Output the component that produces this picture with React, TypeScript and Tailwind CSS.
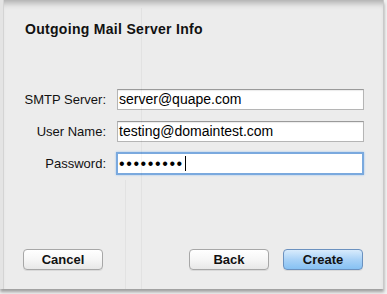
import React from 'react'

const font = { fontFamily: '"Liberation Sans", Arial, sans-serif' }

function Field({ label, value, focused }: { label: string; value?: string; focused?: boolean }) {
  return (
    <div className="flex items-center">
      <label className="w-[104px] shrink-0 pr-[2px] text-right text-[13px] text-[#111]">{label}</label>
      <div
        className={
          focused
            ? 'ml-[8px] flex h-[23px] w-[248px] items-center border-[2px] border-[#7aa9de] bg-white pl-[1px] shadow-[0_0_2px_#9cc3ee]'
            : 'ml-[9px] flex h-[21px] w-[247px] items-center border border-[#b5b5b5] border-t-[#9a9a9a] bg-white pl-[1px] shadow-[inset_0_1px_1px_rgba(0,0,0,0.08)]'
        }
      >
        {focused ? (
          <>
            <span className="text-[16px] leading-none tracking-[1.6px] text-black">•••••••••</span>
            <span className="ml-[1px] h-[15px] w-[1px] bg-black" />
          </>
        ) : (
          <span className="text-[14px] text-black">{value}</span>
        )}
      </div>
    </div>
  )
}

function Button({ children, primary, className }: { children: React.ReactNode; primary?: boolean; className?: string }) {
  return (
    <button
      className={
        'flex h-[21px] items-center justify-center rounded-[4px] border text-[13px] font-bold text-[#111] ' +
        (primary
          ? 'border-[#6b91bf] bg-gradient-to-b from-[#d8ebfc] via-[#a9d2f7] to-[#86c1f3] shadow-[0_1px_0_rgba(0,0,0,0.08)] '
          : 'border-[#a7a7a7] bg-gradient-to-b from-[#ffffff] via-[#f6f6f6] to-[#e8e8e8] shadow-[0_1px_0_rgba(0,0,0,0.08)] ') +
        (className ?? '')
      }
    >
      {children}
    </button>
  )
}

export default function App() {
  return (
    <div className="relative h-[294px] w-[387px] overflow-hidden bg-[#f2f2f2]" style={font}>
      <div className="flex h-[289px] w-[384px] flex-col border-l-[3px] border-r border-l-[#e4e4e4] border-r-[#c9c9c9] bg-[#ececec] shadow-[inset_0_7px_6px_-4px_rgba(0,0,0,0.28),0_3px_3px_rgba(0,0,0,0.35)]">
        <div className="border-l border-[#d4d4d4] flex h-full flex-col">
          <h1 className="ml-[21px] mt-[21px] text-[14px] font-bold leading-[16px] tracking-[0.3px] text-[#111]">Outgoing Mail Server Info</h1>
          <div className="mt-[52px] flex flex-col gap-[11px]">
            <Field label="SMTP Server:" value="server@quape.com" />
            <Field label="User Name:" value="testing@domaintest.com" />
            <div className="-mt-[1px]">
              <Field label="Password:" focused />
            </div>
          </div>
          <div className="mt-auto mb-[19px] flex items-center pl-[19px]">
            <Button className="w-[80px]">Cancel</Button>
            <Button className="ml-[86px] w-[80px]">Back</Button>
            <Button primary className="ml-[14px] w-[80px]">Create</Button>
          </div>
        </div>
      </div>
      <div className="pointer-events-none absolute left-[141px] top-[8px] h-[281px] w-[1px] bg-black/[0.04]" />
      <div className="pointer-events-none absolute left-[125px] top-[180px] h-[109px] w-[1px] bg-black/[0.04]" />
    </div>
  )
}
